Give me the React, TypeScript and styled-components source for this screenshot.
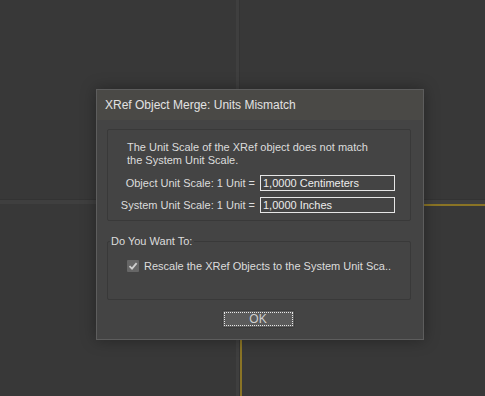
import * as React from 'react';
import styled, { createGlobalStyle } from 'styled-components';

const GlobalStyle = createGlobalStyle`
  *, *::before, *::after {
    box-sizing: border-box;
  }
  html, body {
    margin: 0;
    padding: 0;
    background: #383838;
  }
  body {
    font-family: 'Liberation Sans', Arial, sans-serif;
  }
`;

const Workspace = styled.div`
  position: relative;
  width: 485px;
  height: 396px;
  overflow: hidden;
  display: grid;
  grid-template-columns: 236px 4px 1fr;
  grid-template-rows: 199px 5px 1fr;
  grid-template-areas:
    'tl vt tr'
    'hs hs hs'
    'bl vb br';
  background: #383838;
`;

const Viewport = styled.div<{ area: string; active?: boolean }>`
  grid-area: ${(p) => p.area};
  background: #383838;
  ${(p) => (p.active ? 'border-top: 2px solid #8a7425; border-left: 2px solid #8a7425;' : '')}
`;

const VSplit = styled.div<{ area: string }>`
  grid-area: ${(p) => p.area};
  background: #3f3f3f;
  border-right: 1px solid #343434;
`;

const HSplit = styled.div`
  grid-area: hs;
  background: #3f3f3f;
  border-top: 1px solid #333;
`;

const Dialog = styled.div`
  position: absolute;
  left: 96px;
  top: 89px;
  width: 328px;
  height: 251px;
  border: 1px solid #5d5d5d;
  background: #444444;
  box-shadow: 0 0 14px rgba(0, 0, 0, 0.35);
  display: flex;
  flex-direction: column;
  color: #dcdcdc;
  font-size: 11px;
`;

const TitleBar = styled.div`
  height: 30px;
  background: #4a4946;
  display: flex;
  align-items: center;
  padding-left: 8px;
  font-size: 12px;
  color: #e2e2e2;
`;

const Body = styled.div`
  flex: 1;
  padding: 9px 12px 0 10px;
  display: flex;
  flex-direction: column;
`;

const InfoGroup = styled.div`
  height: 92px;
  border: 1px solid #393939;
  border-radius: 2px;
  padding: 11px 16px 0 0;
`;

const Message = styled.div`
  padding-left: 19px;
  line-height: 13px;
  margin-bottom: 8px;
`;

const ScaleGrid = styled.div`
  display: grid;
  grid-template-columns: 147px 135px;
  column-gap: 5px;
  row-gap: 6px;
  align-items: center;
`;

const ScaleLabel = styled.span`
  text-align: right;
  white-space: nowrap;
`;

const ScaleField = styled.div`
  height: 16px;
  border: 1px solid #e6e6e6;
  padding-left: 2px;
  line-height: 14px;
  color: #ececec;
`;

const OptionGroup = styled.fieldset`
  margin: 13px 0 0 0;
  padding: 0 0 0 19px;
  height: 66px;
  border: 1px solid #393939;
  border-radius: 2px;
  min-inline-size: auto;
`;

const Legend = styled.legend`
  padding: 0 2px 0 1px;
  margin-left: -17px;
  line-height: 14px;
  font-size: 11px;
`;

const CheckRow = styled.label`
  display: flex;
  align-items: center;
  gap: 5px;
  margin-top: 12px;
  white-space: nowrap;
`;

const CheckBox = styled.span`
  width: 12px;
  height: 12px;
  background: #666666;
  border-radius: 1px;
  display: flex;
  align-items: center;
  justify-content: center;
`;

const Footer = styled.div`
  display: flex;
  justify-content: center;
  padding-top: 10px;
  padding-right: 2px;
`;

const OkButton = styled.button`
  width: 73px;
  height: 18px;
  background: #5b5b5b;
  border: 1px solid #3d3d3d;
  border-radius: 2px;
  color: #cfcfcf;
  font-family: 'Liberation Sans', Arial, sans-serif;
  font-size: 12px;
  padding: 0;
  outline: 1px dotted #e8e8e8;
  outline-offset: -3px;
`;

export default function App() {
  return (
    <>
      <GlobalStyle />
      <Workspace>
        <Viewport area="tl" />
        <VSplit area="vt" />
        <Viewport area="tr" />
        <HSplit />
        <Viewport area="bl" />
        <VSplit area="vb" />
        <Viewport area="br" active />

        <Dialog>
          <TitleBar>XRef Object Merge: Units Mismatch</TitleBar>
          <Body>
            <InfoGroup>
              <Message>
                The Unit Scale of the XRef object does not match
                <br />
                the System Unit Scale.
              </Message>
              <ScaleGrid>
                <ScaleLabel>Object Unit Scale: 1 Unit =</ScaleLabel>
                <ScaleField>1,0000 Centimeters</ScaleField>
                <ScaleLabel>System Unit Scale: 1 Unit =</ScaleLabel>
                <ScaleField>1,0000 Inches</ScaleField>
              </ScaleGrid>
            </InfoGroup>
            <OptionGroup>
              <Legend>Do You Want To:</Legend>
              <CheckRow>
                <CheckBox>
                  <svg width="10" height="10" viewBox="0 0 10 10">
                    <path d="M1.5 5.2 L4 7.6 L8.6 2.2" fill="none" stroke="#cfcfcf" strokeWidth="1.8" />
                  </svg>
                </CheckBox>
                Rescale the XRef Objects to the System Unit Sca..
              </CheckRow>
            </OptionGroup>
            <Footer>
              <OkButton>OK</OkButton>
            </Footer>
          </Body>
        </Dialog>
      </Workspace>
    </>
  );
}
